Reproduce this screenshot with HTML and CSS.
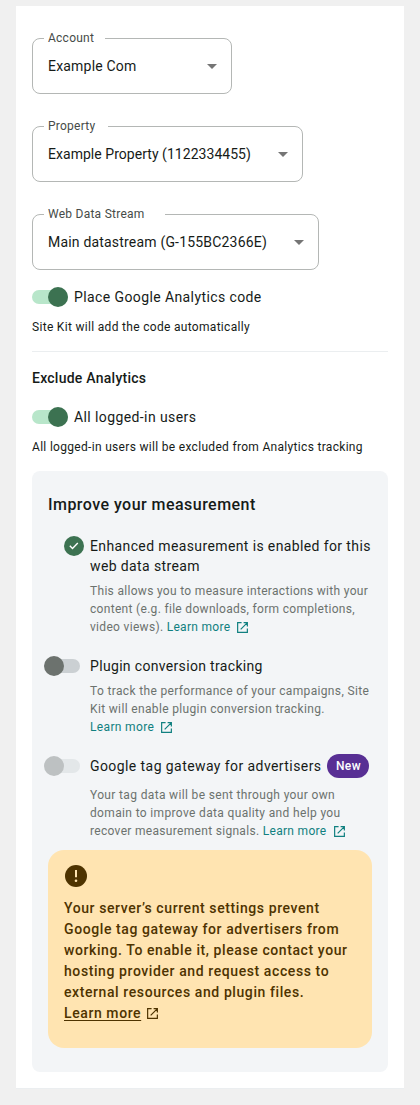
FILE: index.html
```html
<!DOCTYPE html>
<html lang="en">
<head>
<meta charset="utf-8">
<title>Analytics settings</title>
<link rel="stylesheet" href="styles.css">
</head>
<body>
<svg width="0" height="0" class="defs">
  <symbol id="external" viewBox="0 0 12 12"><path d="M5 .7H.7v10.6h10.6V7M7.2.7h4.1v4.1M11.1.9 4 8" fill="none" stroke="currentColor" stroke-width="1.3"/></symbol>
</svg>
<main class="card">
  <div class="field field--account"><span class="field__label">Account</span><span>Example Com</span><i class="arrow"></i></div>
  <div class="field field--property"><span class="field__label">Property</span><span>Example Property (1122334455)</span><i class="arrow"></i></div>
  <div class="field field--stream"><span class="field__label">Web Data Stream</span><span>Main datastream (G-155BC2366E)</span><i class="arrow"></i></div>

  <div class="option"><span class="switch switch--on"></span><span class="option__label">Place Google Analytics code</span></div>
  <p class="help">Site Kit will add the code automatically</p>
  <hr class="divider">
  <h4 class="subheading">Exclude Analytics</h4>
  <div class="option"><span class="switch switch--on"></span><span class="option__label">All logged-in users</span></div>
  <p class="help">All logged-in users will be excluded from Analytics tracking</p>

  <section class="panel">
    <h3 class="panel__title">Improve your measurement</h3>
    <div class="feature">
      <svg class="check" viewBox="0 0 20 20"><circle cx="10" cy="10" r="10" fill="#3c7251"/><path d="m5.8 9.7 2.7 2.7 5.3-5.3" fill="none" stroke="#fff" stroke-width="1.4"/></svg>
      <div>
        <h4 class="feature__title">Enhanced measurement is enabled for this<br>web data stream</h4>
        <p class="feature__text feature__text--measure">This allows you to measure interactions with your<br>content (e.g. file downloads, form completions,<br>video views). <a class="link">Learn more<svg><use href="#external"/></svg></a></p>
      </div>
    </div>
    <div class="feature">
      <span class="switch switch--off"></span>
      <div>
        <h4 class="feature__title feature__title--plugin">Plugin conversion tracking</h4>
        <p class="feature__text">To track the performance of your campaigns, Site<br>Kit will enable plugin conversion tracking.<br><a class="link">Learn more<svg><use href="#external"/></svg></a></p>
      </div>
    </div>
    <div class="feature feature--gateway">
      <span class="switch switch--off switch--disabled"></span>
      <div>
        <h4 class="feature__title feature__title--badged">Google tag gateway for advertisers<span class="badge">New</span></h4>
        <p class="feature__text">Your tag data will be sent through your own<br>domain to improve data quality and help you<br><span class="feature__tail">recover measurement signals. <a class="link">Learn more<svg><use href="#external"/></svg></a></span></p>
      </div>
    </div>
    <div class="notice">
      <svg class="notice__icon" viewBox="0 0 22 22"><circle cx="11" cy="11" r="11" fill="#4e3300"/><path d="M11 5v7.2" stroke="#ffe4b1" stroke-width="2"/><circle cx="11" cy="15.8" r="1.3" fill="#ffe4b1"/></svg>
      <p class="notice__text">Your server’s current settings prevent<br>Google tag gateway for advertisers from<br>working. To enable it, please contact your<br>hosting provider and request access to<br>external resources and plugin files.<br><a class="notice__link"><span>Learn more</span><svg><use href="#external"/></svg></a></p>
    </div>
  </section>
</main>
</body>
</html>
```
FILE: styles.css
```css
* { box-sizing: border-box; }
body { margin: 0; padding: 6px 16px 16px; background: #f0f0f0; color: #161b18; font: 14px/20px Roboto, "Liberation Sans", sans-serif; white-space: nowrap; }
h3, h4, p { margin: 0; font-weight: 400; }
.defs { position: absolute; }
.card { height: 1083px; padding: 32px 16px 16px; background: #fff; border-bottom: 1px solid #ebeef0; }
.field { position: relative; display: flex; align-items: center; justify-content: space-between; height: 56px; margin-bottom: 32px; padding: 0 14px 0 15px; border: 1px solid #b4b7b5; border-radius: 8px; letter-spacing: .2px; }
.field--account { width: 200px; }
.field--property { width: 271px; letter-spacing: .04px; }
.field--stream { width: 287px; margin-bottom: 17px; letter-spacing: .19px; }
.field__label { position: absolute; top: -9px; left: 11px; width: 61px; padding-left: 4px; background: #fff; color: #464b48; font-size: 12px; line-height: 16px; letter-spacing: .25px; }
.field--property .field__label { width: 64px; }
.field--stream .field__label { width: 121px; }
.arrow { border: 5px solid transparent; border-top-color: #757575; border-bottom: 0; }
.option { display: flex; align-items: center; gap: 6px; height: 20px; letter-spacing: .4px; }
.switch { position: relative; width: 36px; height: 14px; border-radius: 7px; background: #b8e6ca; flex: none; }
.switch::after { content: ""; position: absolute; top: -3px; right: 0; width: 20px; height: 20px; border-radius: 50%; background: #3c7251; }
.help { margin-top: 10px; font-size: 12px; line-height: 20px; letter-spacing: .31px; }
.divider { height: 1px; margin: 14px 0 16px; border: 0; background: #ebeef0; }
.subheading { font-weight: 500; margin-bottom: 19px; letter-spacing: .25px; }
.panel { height: 601px; margin-top: 14px; padding: 22px 16px 24px; border-radius: 8px; background: #f3f5f7; }
.panel__title { font-size: 16px; font-weight: 500; line-height: 24px; margin-bottom: 19px; letter-spacing: .46px; }
.feature { display: grid; grid-template-columns: 36px 1fr; column-gap: 6px; margin-bottom: 20px; }
.feature--gateway { margin-bottom: 10px; }
.check { width: 20px; height: 20px; justify-self: end; }
.feature .switch { margin-top: 3px; width: 32px; }
.feature .switch--off { background: #cbd0d3; }
.switch--off::after { right: auto; left: -4px; background: #6c726e; }
.feature .switch--disabled { background: #e3e7e9; }
.switch--disabled::after { background: #bdc1c2; }
.feature__title { letter-spacing: .38px; }
.feature__title--plugin { letter-spacing: .33px; }
.feature__title--badged { display: flex; gap: 6px; align-items: center; height: 20px; letter-spacing: .42px; }
.badge { width: 42px; height: 24px; border-radius: 12px; background: #582f94; color: #fff; font-size: 12px; font-weight: 500; line-height: 24px; text-align: center; letter-spacing: .4px; }
.feature__text { margin-top: 6px; color: #6c726e; font-size: 12px; line-height: 18px; letter-spacing: .35px; }
.feature__text--measure { letter-spacing: .31px; }
.feature__tail { letter-spacing: .31px; }
.feature--gateway .feature__text { margin-top: 10px; }
.link { color: #108080; }
.link svg { width: 11px; height: 11px; margin-left: 7px; vertical-align: -2px; }
.notice { height: 198px; padding: 15px 16px; border-radius: 16px; background: #ffe4b1; color: #4e3300; }
.notice__icon { display: block; width: 22px; height: 22px; margin: 0 0 11px 1px; }
.notice__text { font-weight: 500; line-height: 21px; letter-spacing: .59px; }
.notice__link span { text-decoration: underline; text-underline-offset: 2px; }
.notice__link svg { width: 11px; height: 11px; margin-left: 6px; vertical-align: -1px; }
```
